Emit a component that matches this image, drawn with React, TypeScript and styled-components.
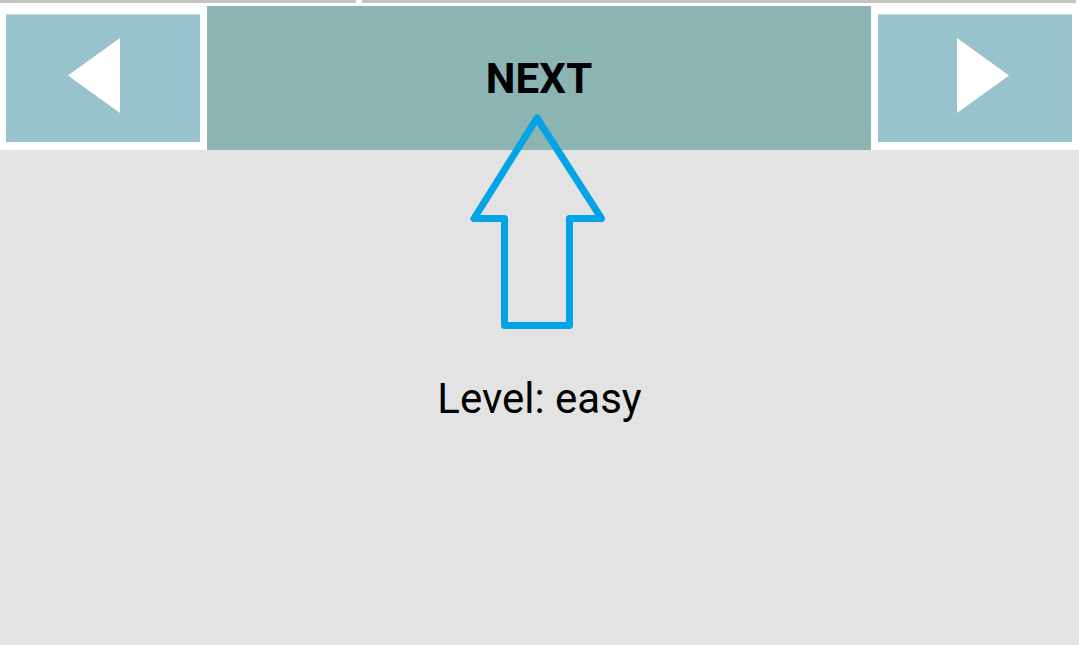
import React from "react";
import styled, { createGlobalStyle } from "styled-components";

const GlobalStyle = createGlobalStyle`
  html, body {
    margin: 0;
    padding: 0;
    background: #ffffff;
    font-family: Roboto, "Liberation Sans", sans-serif;
  }
`;

const Screen = styled.div`
  position: relative;
  width: 1079px;
  height: 645px;
  display: flex;
  flex-direction: column;
  overflow: hidden;
  background: #ffffff;
`;

const TopStrip = styled.div`
  height: 6px;
  display: flex;
  gap: 6px;
  padding-right: 3px;
`;

const StripBar = styled.div<{ $width?: number }>`
  height: 3px;
  background: #c3c3c3;
  ${(p) => (p.$width ? `width: ${p.$width}px;` : "flex: 1;")}
`;

const NavRow = styled.div`
  height: 144px;
  display: grid;
  grid-template-columns: 207px 664px 208px;
`;

const SideCell = styled.div<{ $left: number }>`
  background: #ffffff;
  padding: 8px 7px 8px ${(p) => p.$left}px;
  display: flex;
`;

const ArrowButton = styled.div<{ $shift: number }>`
  flex: 1;
  background: #99c3cc;
  border-top: 1px solid #c4dde2;
  display: flex;
  align-items: center;
  justify-content: center;
  padding-bottom: 6px;
  padding-left: ${(p) => (p.$shift > 0 ? p.$shift * 2 : 0)}px;
  padding-right: ${(p) => (p.$shift < 0 ? -p.$shift * 2 : 0)}px;
`;

const NextButton = styled.div`
  background: #8bb4b3;
  display: flex;
  align-items: center;
  justify-content: center;
  font-size: 42px;
  font-weight: 700;
  color: #000000;
  letter-spacing: 0.2px;
`;

const Main = styled.div`
  flex: 1;
  background: #e3e3e3;
  display: flex;
  justify-content: center;
  padding-top: 228px;
`;

const LevelText = styled.div`
  font-size: 42px;
  line-height: 1;
  color: #000000;
  height: 42px;
`;

const Pointer = styled.svg`
  position: absolute;
  left: 466px;
  top: 110px;
  width: 144px;
  height: 224px;
`;

function Triangle({ dir }: { dir: "left" | "right" }) {
  const pts = dir === "left" ? "0,37.5 52,0 52,75" : "0,0 52,37.5 0,75";
  return (
    <svg width="52" height="75" viewBox="0 0 52 75">
      <polygon points={pts} fill="#ffffff" />
    </svg>
  );
}

export default function App() {
  return (
    <>
      <GlobalStyle />
      <Screen>
        <TopStrip>
          <StripBar $width={356} />
          <StripBar />
        </TopStrip>
        <NavRow>
          <SideCell $left={6}>
            <ArrowButton $shift={-9}>
              <Triangle dir="left" />
            </ArrowButton>
          </SideCell>
          <NextButton>NEXT</NextButton>
          <SideCell $left={7}>
            <ArrowButton $shift={8}>
              <Triangle dir="right" />
            </ArrowButton>
          </SideCell>
        </NavRow>
        <Main>
          <LevelText>Level: easy</LevelText>
        </Main>
        <Pointer viewBox="0 0 144 224">
          <path
            d="M71 8 L8 108.5 L38.5 108.5 L38.5 215.5 L103.5 215.5 L103.5 108.5 L135.5 108.5 Z"
            fill="none"
            stroke="#03a4e6"
            strokeWidth="7"
            strokeLinejoin="round"
          />
        </Pointer>
      </Screen>
    </>
  );
}
